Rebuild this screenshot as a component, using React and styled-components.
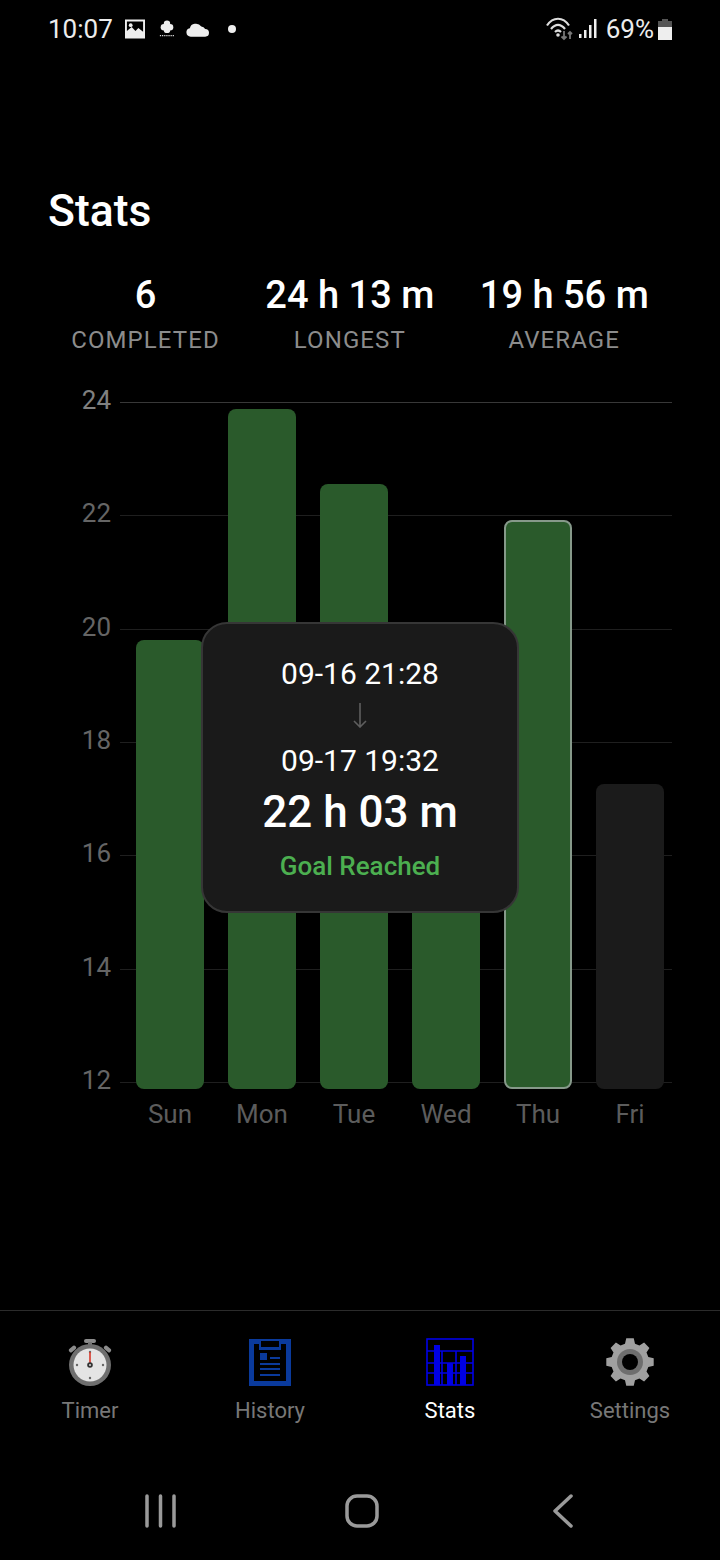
import React from 'react'
import styled, { createGlobalStyle } from 'styled-components'

const GlobalStyle = createGlobalStyle`
  html, body {
    margin: 0;
    padding: 0;
    background: #000;
    font-family: Roboto, "Liberation Sans", sans-serif;
  }
`

const Screen = styled.div`
  width: 720px;
  height: 1560px;
  background: #000;
  display: flex;
  flex-direction: column;
  overflow: hidden;
`

const StatusBar = styled.div`
  height: 58px;
  padding: 0 48px;
  display: flex;
  align-items: center;
  justify-content: space-between;
  color: #ececec;
  font-size: 26px;
`

const StatusGroup = styled.div`
  display: flex;
  align-items: center;
`

const StatusSlot = styled.span`
  display: flex;
  margin-left: ${props => props.$left}px;
`

const Main = styled.main`
  flex: 1;
  display: flex;
  flex-direction: column;
`

const Title = styled.h1`
  margin: 127px 0 0 48px;
  font-size: 44.5px;
  line-height: 52px;
  font-weight: 500;
  color: #fff;
`

const Summary = styled.div`
  margin-top: 36px;
  display: flex;
  justify-content: center;
  gap: 45.5px;
`

const SummaryItem = styled.div`
  text-align: center;
`

const SummaryValue = styled.div`
  font-size: 38px;
  line-height: 44px;
  font-weight: 500;
  color: #fff;
`

const SummaryLabel = styled.div`
  margin-top: 9px;
  font-size: 24px;
  line-height: 28px;
  letter-spacing: 1.1px;
  color: #8c8c8c;
`

const Chart = styled.div`
  margin-top: 48px;
  padding: 0 48px 0 72px;
`

const Plot = styled.div`
  position: relative;
  height: 681px;
  display: flex;
  flex-direction: column;
  justify-content: space-between;
`

const Tick = styled.div`
  height: 1px;
  display: flex;
  align-items: center;
  gap: 9px;
`

const TickLabel = styled.span`
  width: 39px;
  margin-bottom: 5px;
  text-align: right;
  font-size: 26px;
  color: ${props => props.$top ? '#808080' : '#656565'};
`

const TickLine = styled.span`
  flex: 1;
  height: 1px;
  background: ${props => props.$top ? '#383838' : '#1f1f1f'};
`

const Bars = styled.div`
  position: absolute;
  left: 64px;
  bottom: -6px;
  height: 687px;
  display: flex;
  align-items: flex-end;
  gap: 24px;
`

const Bar = styled.div`
  box-sizing: border-box;
  width: 68px;
  border-radius: 8px;
  background: ${props => props.$muted ? '#1b1b1b' : '#2a5a2b'};
  border: ${props => props.$selected ? '2px solid #86998a' : 'none'};
`

const Days = styled.div`
  margin-top: 15px;
  padding-left: 64px;
  display: flex;
  gap: 24px;
`

const Day = styled.span`
  width: 68px;
  text-align: center;
  font-size: 26px;
  line-height: 32px;
  color: #5c5c5c;
`

const Tooltip = styled.div`
  position: absolute;
  left: 129px;
  top: 220px;
  box-sizing: border-box;
  width: 318px;
  height: 291px;
  padding-top: 30px;
  border: 2px solid #363636;
  border-radius: 26px;
  background: #1a1a1a;
  text-align: center;
`

const TooltipDate = styled.div`
  font-size: 30px;
  line-height: 40px;
  color: #fff;
`

const TooltipArrow = styled.div`
  box-sizing: border-box;
  height: 47px;
  padding-bottom: 5px;
  display: flex;
  align-items: center;
  justify-content: center;
`

const TooltipDuration = styled.div`
  margin-top: 5px;
  font-size: 44px;
  line-height: 52px;
  font-weight: 500;
  color: #fff;
`

const TooltipGoal = styled.div`
  margin-top: 12px;
  font-size: 26px;
  line-height: 32px;
  font-weight: 500;
  color: #4caf50;
`

const TabBar = styled.nav`
  height: 168px;
  box-sizing: border-box;
  border-top: 1px solid #2b2b2b;
  display: grid;
  grid-template-columns: repeat(4, 180px);
`

const Tab = styled.div`
  padding-top: 27px;
  display: flex;
  flex-direction: column;
  align-items: center;
  font-size: 22px;
  line-height: 28px;
  color: ${props => props.$active ? '#fff' : '#777'};
`

const TabLabel = styled.span`
  margin-top: 11px;
`

const NavBar = styled.div`
  height: 82px;
  padding: 0 56px 16px 60px;
  box-sizing: border-box;
  display: grid;
  grid-template-columns: repeat(3, 1fr);
  justify-items: center;
  align-items: center;
`

const GEAR_TEETH = 8

const gearPoints = () => {
  const step = Math.PI * 2 / GEAR_TEETH
  const corners = [[-0.34, 19], [-0.2, 24], [0.2, 24], [0.34, 19]]
  const points = []
  for (let i = 0; i < GEAR_TEETH; i++) {
    const a = i * step - Math.PI / 2
    corners.forEach(([off, r]) => {
      const t = a + off * step
      points.push(`${(24 + r * Math.cos(t)).toFixed(2)},${(24 + r * Math.sin(t)).toFixed(2)}`)
    })
  }
  return points.join(' ')
}

const ImageIcon = () => (
  <svg width="20" height="20" viewBox="0 0 21 20">
    <path fill="#eee" fillRule="evenodd" d="M0 0h21v20H0zM2 2v10l5-4 4 4 3-3 5 4V2z" />
    <circle cx="6" cy="6" r="2" fill="#eee" />
  </svg>
)

const TreeIcon = () => (
  <svg width="16" height="20" viewBox="0 0 18 20">
    <g fill="#eee">
      <circle cx="9" cy="4" r="3.600" />
      <circle cx="5.500" cy="8" r="3.600" />
      <circle cx="12.500" cy="8" r="3.600" />
      <circle cx="9" cy="11" r="3.600" />
    </g>
    <path stroke="#ddd" strokeWidth="1.400" strokeDasharray="1.400 1" d="M1 17.500h16" />
  </svg>
)

const CloudIcon = () => (
  <svg width="23" height="15" viewBox="0 0 24 15">
    <path fill="#eee" d="M5 15a4.500 4.500 0 0 1-1-8.900A6 6 0 0 1 9 1.600a7 7 0 0 1 7 2.800 5.500 5.500 0 0 1 4 2.600A4 4 0 0 1 20 15z" />
  </svg>
)

const Dot = () => (
  <svg width="8" height="8" viewBox="0 0 8 8">
    <circle cx="4" cy="4" r="4" fill="#eee" />
  </svg>
)

const WifiIcon = () => (
  <svg width="28" height="24" viewBox="0 0 28 24" fill="none">
    <path stroke="#ddd" strokeWidth="2.200" d="M1 8.500C7-.5 17-.5 23 8.500" />
    <path stroke="#ddd" strokeWidth="2.200" d="M5 12c4.500-5.500 9.500-5.500 14 0" />
    <path stroke="#ddd" strokeWidth="2.200" d="M9 15c2-2 4-2 6 0" />
    <circle cx="12" cy="18" r="1.800" fill="#ddd" />
    <path stroke="#777" strokeWidth="1.800" d="M18 14v8M15.500 19.500 18 22l2.500-2.500M24 22v-7M22 17l2-2 2 2" />
  </svg>
)

const SignalIcon = () => (
  <svg width="18" height="20" viewBox="0 0 18 20">
    <path fill="#eee" d="M0 15h2.500v4H0zM5 11h2.500v8H5zM10 6h2.500v13H10zM15 0h2.500v19H15z" />
  </svg>
)

const BatteryIcon = () => (
  <svg width="14" height="21" viewBox="0 0 14 21">
    <path fill="#555" d="M4 0h6v2h4v6H0V2h4z" />
    <path fill="#eee" d="M0 8h14v13H0z" />
  </svg>
)

const TimerIcon = () => (
  <svg width="48" height="48" viewBox="0 0 48 48">
    <rect x="18" y="1" width="12" height="4" rx="2" fill="#8c8c8c" />
    <rect x="22" y="4" width="4" height="4" fill="#777" />
    <rect x="2.500" y="9" width="8" height="4" rx="1.500" fill="#8c8c8c" transform="rotate(-40 6.500 11)" />
    <rect x="37.500" y="9" width="8" height="4" rx="1.500" fill="#8c8c8c" transform="rotate(40 41.500 11)" />
    <circle cx="24" cy="27" r="21" fill="#6f6f6f" />
    <circle cx="24" cy="27" r="16.500" fill="#e4e4e4" />
    <circle cx="24" cy="14" r="1.200" fill="#666" />
    <circle cx="24" cy="40" r="1.200" fill="#666" />
    <circle cx="11" cy="27" r="1.200" fill="#666" />
    <circle cx="37" cy="27" r="1.200" fill="#666" />
    <rect x="23.200" y="14" width="1.600" height="12" fill="#d8392b" />
    <circle cx="24" cy="27" r="2.800" fill="#333" />
    <circle cx="24" cy="27" r="1" fill="#ddd" />
  </svg>
)

const HistoryIcon = () => (
  <svg width="42" height="48" viewBox="0 0 42 48">
    <path fill="#0a3a9c" d="M0 1h42v47H0z" />
    <path fill="#000" d="M5 6h32v37H5z" />
    <path fill="#0a3a9c" d="M10 1h22v11H10z" />
    <path fill="#000" d="M12 3h18v6H12z" />
    <path fill="#0a3a9c" d="M11 15h7v7h-7zM21 19h10v2H21zM11 25h20v2H11zM11 30h20v2H11zM11 36h20v2H11z" />
  </svg>
)

const StatsIcon = () => (
  <svg width="48" height="48" viewBox="0 0 48 48">
    <g fill="none" stroke="#0000e6" strokeWidth="1.600">
      <rect x="1" y="1" width="46" height="46" />
      <path d="M1 13h46M1 25h46M1 35h46M16 13v34M30 13v34" />
    </g>
    <path fill="#0000e6" d="M8 7h6v40H8zM21 25h6v22h-6zM34 18h6v29h-6z" />
  </svg>
)

const SettingsIcon = () => (
  <svg width="48" height="48" viewBox="0 0 48 48">
    <polygon points={gearPoints()} fill="#a0a0a0" />
    <circle cx="24" cy="24" r="13" fill="#6e6e6e" />
    <circle cx="24" cy="24" r="8" fill="#000" />
  </svg>
)

const DownArrow = () => (
  <svg width="14" height="26" viewBox="0 0 14 26" fill="none" stroke="#5e5e5e" strokeWidth="1.600">
    <path d="M7 1v24M1 19l6 6 6-6" />
  </svg>
)

const RecentsIcon = () => (
  <svg width="31" height="34" viewBox="0 0 31 34" stroke="#9a9a9a" strokeWidth="3.500" strokeLinecap="round">
    <path d="M2 2v30M15.500 2v30M29 2v30" />
  </svg>
)

const HomeIcon = () => (
  <svg width="34" height="34" viewBox="0 0 34 34" fill="none" stroke="#9a9a9a" strokeWidth="3.500">
    <rect x="2" y="2" width="30" height="30" rx="10" />
  </svg>
)

const BackIcon = () => (
  <svg width="20" height="34" viewBox="0 0 20 34" fill="none" stroke="#9a9a9a" strokeWidth="3.500" strokeLinecap="round" strokeLinejoin="round">
    <path d="M18 2 2 17l16 15" />
  </svg>
)

const summary = [
  { value: '6', label: 'COMPLETED' },
  { value: '24 h 13 m', label: 'LONGEST' },
  { value: '19 h 56 m', label: 'AVERAGE' }
]

const ticks = [24, 22, 20, 18, 16, 14, 12]

const days = [
  { name: 'Sun', height: 449 },
  { name: 'Mon', height: 680 },
  { name: 'Tue', height: 605 },
  { name: 'Wed', height: 400 },
  { name: 'Thu', height: 569, selected: true },
  { name: 'Fri', height: 305, muted: true }
]

const tabs = [
  { label: 'Timer', Icon: TimerIcon },
  { label: 'History', Icon: HistoryIcon },
  { label: 'Stats', Icon: StatsIcon, active: true },
  { label: 'Settings', Icon: SettingsIcon }
]

const App = () => (
  <Screen>
    <GlobalStyle />
    <StatusBar>
      <StatusGroup>
        <span>10:07</span>
        <StatusSlot $left={12}><ImageIcon /></StatusSlot>
        <StatusSlot $left={14}><TreeIcon /></StatusSlot>
        <StatusSlot $left={11}><CloudIcon /></StatusSlot>
        <StatusSlot $left={19}><Dot /></StatusSlot>
      </StatusGroup>
      <StatusGroup>
        <WifiIcon />
        <StatusSlot $left={5}><SignalIcon /></StatusSlot>
        <StatusSlot $left={9}>69%</StatusSlot>
        <StatusSlot $left={4}><BatteryIcon /></StatusSlot>
      </StatusGroup>
    </StatusBar>
    <Main>
      <Title>Stats</Title>
      <Summary>
        {summary.map(item => (
          <SummaryItem key={item.label}>
            <SummaryValue>{item.value}</SummaryValue>
            <SummaryLabel>{item.label}</SummaryLabel>
          </SummaryItem>
        ))}
      </Summary>
      <Chart>
        <Plot>
          {ticks.map(tick => (
            <Tick key={tick}>
              <TickLabel $top={tick === 24}>{tick}</TickLabel>
              <TickLine $top={tick === 24} />
            </Tick>
          ))}
          <Bars>
            {days.map(day => (
              <Bar
                key={day.name}
                style={{ height: day.height }}
                $selected={day.selected}
                $muted={day.muted}
              />
            ))}
          </Bars>
          <Tooltip>
            <TooltipDate>09-16 21:28</TooltipDate>
            <TooltipArrow><DownArrow /></TooltipArrow>
            <TooltipDate>09-17 19:32</TooltipDate>
            <TooltipDuration>22 h 03 m</TooltipDuration>
            <TooltipGoal>Goal Reached</TooltipGoal>
          </Tooltip>
        </Plot>
        <Days>
          {days.map(day => <Day key={day.name}>{day.name}</Day>)}
        </Days>
      </Chart>
    </Main>
    <TabBar>
      {tabs.map(({ label, Icon, active }) => (
        <Tab key={label} $active={active}>
          <Icon />
          <TabLabel>{label}</TabLabel>
        </Tab>
      ))}
    </TabBar>
    <NavBar>
      <RecentsIcon />
      <HomeIcon />
      <BackIcon />
    </NavBar>
  </Screen>
)

export default App
